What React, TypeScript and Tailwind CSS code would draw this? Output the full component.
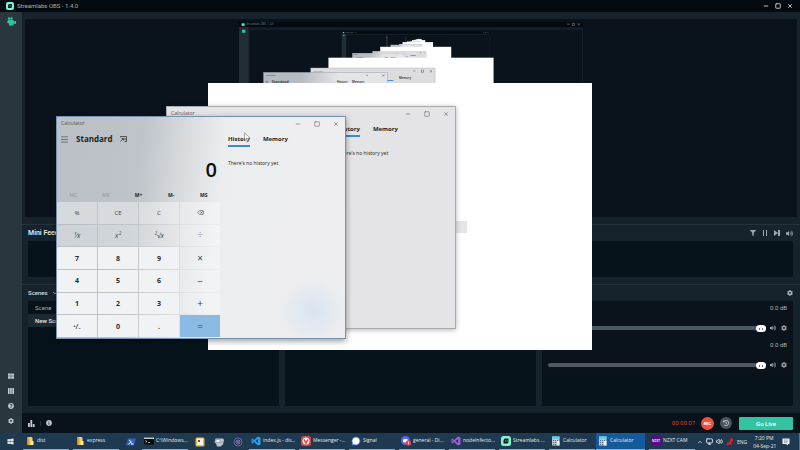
import React from "react";
import {
  FaCog,
  FaFilter,
  FaHistory,
  FaInfoCircle,
  FaQuestionCircle,
  FaThLarge,
  FaVolumeUp,
  FaWindows,
} from "react-icons/fa";
import { ChevronDown, ChevronUp, Delete, Menu, Minus, Monitor, Square, Volume2, X } from "lucide-react";

const ROBOTO = "font-['Roboto',sans-serif]";
const SEGOE = "font-['Open_Sans','Noto_Sans',sans-serif]";

/* ---------- Live preview: the captured screen contains itself ---------- */

const SCALE = 0.43;

function Capture({ ox, oy, s, depth }: { ox: number; oy: number; s: number; depth: number }) {
  const X = (v: number) => ox + v * s;
  const Y = (v: number) => oy + v * s;
  const rect = (x: number, y: number, w: number, h: number, fill: string, stroke?: string) => (
    <rect x={X(x)} y={Y(y)} width={w * s} height={h * s} fill={fill} stroke={stroke} strokeWidth={stroke ? s : 0} />
  );
  const label = (x: number, y: number, size: number, text: string, weight: number, fill: string) => (
    <text x={X(x)} y={Y(y)} fontSize={size * s} fontWeight={weight} fill={fill}>
      {text}
    </text>
  );
  const detailed = depth < 2;
  return (
    <g>
      {rect(0, 0, 800, 450, "#131f28")}
      {rect(0, 0, 800, 12, "#030a10")}
      {rect(0, 12, 22, 421, "#222e36")}
      {rect(25, 19, 772, 198, "#0a131c")}
      {rect(6, 3, 7, 6, "#5fe3c4")}
      {rect(7, 18, 8, 7, "#2fbfa0")}
      {detailed && label(17, 8, 6, "Streamlabs OBS - 1.4.0", 400, "#7b858b")}
      {detailed && (
        <path
          d={`M${X(763)} ${Y(5)}h${6 * s}M${X(775)} ${Y(3)}h${5 * s}v${5 * s}h${-5 * s}zM${X(788)} ${Y(3)}l${5 * s} ${5 * s}m0 ${-5 * s}l${-5 * s} ${5 * s}`}
          stroke="#a7b0b5"
          strokeWidth={s}
          fill="none"
        />
      )}
      {depth < 5 && <Capture ox={X(239)} oy={Y(22)} s={s * SCALE} depth={depth + 1} />}
      {rect(208, 83, 384, 267, "#ffffff")}
      {rect(167, 107, 289, 222, "#dddcde", "#a9abae")}
      {rect(57, 117, 289, 222, "url(#glass)", "#8b98a5")}
      {detailed && (
        <g>
          {label(172, 116, 5, "Calculator", 400, "#777777")}
          {label(372, 132, 7, "Memory", 600, "#222222")}
          {label(62, 126, 5, "Calculator", 400, "#333333")}
          {label(76, 142, 9, "Standard", 600, "#222222")}
          {label(228, 142, 7, "History", 600, "#222222")}
          {label(263, 142, 7, "Memory", 600, "#222222")}
          <path
            d={`M${X(405)} ${Y(114)}h${5 * s}M${X(424)} ${Y(112)}h${5 * s}v${5 * s}h${-5 * s}zM${X(444)} ${Y(112)}l${5 * s} ${5 * s}m0 ${-5 * s}l${-5 * s} ${5 * s}M${X(295)} ${Y(124)}h${5 * s}M${X(333)} ${Y(122)}l${5 * s} ${5 * s}m0 ${-5 * s}l${-5 * s} ${5 * s}M${X(62)} ${Y(138)}h${6 * s}m0 ${3 * s}h${-6 * s}`}
            stroke="#444444"
            strokeWidth={s}
            fill="none"
          />
          <path d={`M${X(346)} ${Y(136)}h${13 * s}`} stroke="#2f80cc" strokeWidth={2 * s} />
        </g>
      )}
    </g>
  );
}

function Preview() {
  return (
    <div className="mx-[3px] mt-[7px] flex min-h-0 flex-1 items-center justify-center overflow-hidden bg-[#0a131c]">
      <svg viewBox="0 0 344 193" className="h-[193px] w-[344px] font-['Open_Sans',sans-serif]" aria-label="Live preview">
        <defs>
          <linearGradient id="glass">
            <stop offset="0.3" stopColor="#b5bbc1" />
            <stop offset="0.6" stopColor="#e4e5e7" />
          </linearGradient>
        </defs>
        <Capture ox={0} oy={0} s={SCALE} depth={0} />
      </svg>
    </div>
  );
}

/* ---------- Streamlabs ---------- */

function StreamlabsLogo({ className }: { className: string }) {
  return (
    <svg viewBox="0 0 16 16" className={className}>
      <rect width="16" height="16" rx="4" fill="#80f5d2" />
      <path d="M4 12V7a3 3 0 0 1 3-3h5v5a3 3 0 0 1-3 3z" fill="#0a1a20" />
      <path d="M7.500 7v2M10 7v2" stroke="#80f5d2" strokeWidth="1.2" />
    </svg>
  );
}

function TitleBar() {
  return (
    <header className="flex h-3 shrink-0 items-center bg-[#030b10] pr-[7px] pl-[6px] text-[#a4adb2]">
      <StreamlabsLogo className="size-[8px]" />
      <h1 className="ml-[3px] flex-1 text-[6px] leading-[12px]">Streamlabs OBS - 1.4.0</h1>
      <div className="flex gap-[6px] text-[#b7bec2]">
        <button aria-label="Minimize"><Minus className="size-[6px]" strokeWidth={4} /></button>
        <button aria-label="Maximize"><Square className="size-[6px]" strokeWidth={4} /></button>
        <button aria-label="Close"><X className="size-[6px]" strokeWidth={4} /></button>
      </div>
    </header>
  );
}

function Sidebar() {
  return (
    <nav className="flex w-[22px] shrink-0 flex-col items-center bg-[#2a363e] pt-[5px] pb-[9px] text-[#c3cacd]">
      <button aria-label="Editor">
        <svg viewBox="0 0 18 18" className="size-[9px] fill-[#31c3a2]">
          <circle cx="4" cy="3" r="2.4" />
          <circle cx="9" cy="3" r="2.4" />
          <path d="M2 6h11v3l5-1v6l-5-1v4H4v-4L0 11z" />
        </svg>
      </button>
      <div className="mt-auto flex flex-col items-center gap-[9px]">
        <button aria-label="Dashboard"><FaThLarge className="size-[6px]" /></button>
        <button aria-label="Layout">
          <svg viewBox="0 0 6 6" className="size-[6px] fill-current"><path d="M0 0h1.6v6H0zM2.2 0h1.6v6H2.2zM4.4 0H6v6H4.4z" /></svg>
        </button>
        <button aria-label="Help"><FaQuestionCircle className="size-[6px]" /></button>
        <button aria-label="Settings"><FaCog className="size-[6px]" /></button>
      </div>
    </nav>
  );
}

function MixerRow({ name }: { name: string }) {
  return (
    <div className="h-[37px]">
      <div className="text-right text-[6px] leading-[8px] text-[#a9b2b7]">0.0 dB</div>
      <div className="mt-[12px] flex h-[8px] items-center gap-[4px] text-[#98a2a8]">
        <input
          type="range"
          aria-label={name}
          min={0}
          max={100}
          defaultValue={100}
          className="h-[4px] min-w-0 flex-1 appearance-none rounded-full bg-[#4d5962] [&::-webkit-slider-thumb]:h-[7px] [&::-webkit-slider-thumb]:w-[10px] [&::-webkit-slider-thumb]:appearance-none [&::-webkit-slider-thumb]:rounded-full [&::-webkit-slider-thumb]:bg-white [&::-webkit-slider-thumb]:bg-[linear-gradient(#6b7478,#6b7478),linear-gradient(#6b7478,#6b7478)] [&::-webkit-slider-thumb]:bg-[length:1px_2px] [&::-webkit-slider-thumb]:bg-[position:3px_3px,6px_3px] [&::-webkit-slider-thumb]:bg-no-repeat"
        />
        <button aria-label={"Mute " + name}><FaVolumeUp className="size-[6px]" /></button>
        <button aria-label={"Options for " + name} className="ml-[1px]"><FaCog className="size-[6px]" /></button>
      </div>
    </div>
  );
}

function Panels() {
  return (
    <div className="mt-[7px] border-t border-[#24313a] pr-[7px] pl-[6px]">
      <section>
        <div className="flex h-4 items-center text-[#9ea7ac]">
          <h2 className="flex-1 text-[7px] leading-[16px] font-semibold text-[#e4e8ea]">Mini Feed</h2>
          <div className="flex items-center gap-[6px]">
            <button aria-label="Filter"><FaFilter className="size-[6px]" /></button>
            <button aria-label="Pause">
              <svg viewBox="0 0 6 6" className="size-[6px] stroke-current"><path d="M1.500 0v6M4.500 0v6" /></svg>
            </button>
            <button aria-label="Skip">
              <svg viewBox="0 0 6 6" className="size-[6px] fill-current"><path d="M0 0l4 3-4 3zM4 0h2v6H4z" /></svg>
            </button>
            <button aria-label="Mute"><FaVolumeUp className="size-[7px]" /></button>
          </div>
        </div>
        <div className="h-9 rounded-[1px] bg-[#07131b]" />
      </section>
      <div className="-mr-[7px] -ml-[6px] mt-[7px] border-t border-[#24313a]" />
      <div className="grid grid-cols-3 gap-[6px]">
        <section>
          <div className="flex h-4 items-center gap-[4px] text-[#d9dee1]">
            <h2 className="text-[6px] leading-[16px] font-medium">Scenes</h2>
            <ChevronDown className="size-[6px]" strokeWidth={3} />
          </div>
          <ul className="h-[105px] bg-[#07131b] text-[6px] leading-[13px]">
            <li className="px-[7px] text-[#a4adb2]">Scene</li>
            <li className="bg-[#1c2930] px-[7px] font-medium text-[#e4e8ea]">New Scene</li>
          </ul>
        </section>
        <section>
          <div className="h-4" />
          <div className="h-[105px] bg-[#07131b]" />
        </section>
        <section>
          <div className="flex h-4 items-center justify-end text-[#aeb6ba]">
            <button aria-label="Mixer settings"><FaCog className="size-[6px]" /></button>
          </div>
          <div className="h-[105px] bg-linear-to-b from-[#0a121b] from-70% to-[#07131b] to-75% px-[6px] pt-[3px]">
            <MixerRow name="Desktop Audio" />
            <MixerRow name="Mic/Aux" />
          </div>
        </section>
      </div>
    </div>
  );
}

function Footer() {
  return (
    <footer className="mt-[7px] flex h-5 shrink-0 items-center bg-[#07121a] pr-[7px] pl-[6px] text-[#c3cacd]">
      <button aria-label="Performance">
        <svg viewBox="0 0 7 7" className="size-[7px] fill-current"><path d="M0 3h1.8v4H0zM2.400 0h1.8v7H2.4zM4.8 4h1.8v3H4.8z" /></svg>
      </button>
      <span className="mx-[5px] h-[5px] w-px bg-[#2a363e]" />
      <button aria-label="Information"><FaInfoCircle className="size-[6px]" /></button>
      <span className="ml-auto text-[6px] leading-[8px] text-[#d8402f]">00:00:07</span>
      <button className="ml-[6px] size-[13px] rounded-full bg-[#f1513b] text-center text-[4px] leading-[13px] font-bold text-white">REC</button>
      <button aria-label="Replay buffer" className="ml-[6px] flex size-[12px] items-center justify-center rounded-full bg-[#4a555d]">
        <FaHistory className="size-[6px]" />
      </button>
      <button className="ml-[7px] h-[13px] w-[54px] rounded-[1px] bg-[#31c3a2] text-[6px] leading-[13px] font-medium text-white">Go Live</button>
    </footer>
  );
}

/* ---------- Calculator ---------- */

const KEYS = ["%", "CE", "C", "⌫", "¹⁄x", "x²", "²√x", "÷", "7", "8", "9", "×", "4", "5", "6", "−", "1", "2", "3", "+", "⁺∕₋", "0", ".", "="];

function keyStyle(i: number) {
  if (i === 23) return "bg-[#8bbbe2] text-[10px] text-[#244a68]";
  if (i === 7) return "bg-white/35 text-[10px] text-[#999999]";
  if (i % 4 === 3) return "bg-white/35 text-[10px] text-[#444444]";
  if (i < 4) return "bg-white/40 text-[6px] text-[#444444]";
  if (i < 8) return "bg-white/30 text-[7px] italic text-[#444444]";
  if (i === 20) return "bg-[#f1f2f4] text-[7px] font-semibold text-[#333333]";
  return "bg-[#f1f2f4] text-[7px] font-bold text-[#2c2c2c]";
}

function Keypad() {
  return (
    <div className="flex w-[163px] shrink-0 flex-col">
      <div className="flex h-[18px] items-center px-[3px]">
        <button aria-label="Navigation" className="mr-[7px]"><Menu className="size-[9px] text-[#555555]" strokeWidth={2} /></button>
        <h2 className="text-[8px] leading-[18px] font-bold text-[#222222]">Standard</h2>
        <button aria-label="Keep on top" className="ml-[7px]">
          <svg viewBox="0 0 14 12" className="h-[6px] w-[7px] fill-none stroke-[#333333]" strokeWidth="1.6">
            <path d="M1 1h12v10H9M1 1v2M1 11l6-6M3 5h4v4M10 4v4" />
          </svg>
        </button>
      </div>
      <output className="h-[42px] pr-[3px] text-right text-[20px] leading-[44px] font-semibold text-[#0d0d0d]">0</output>
      <div className="grid h-[12px] grid-cols-5 items-start text-[5px] leading-[10px] font-bold text-[#222222]">
        <button disabled className="font-normal text-[#8f969c]">MC</button>
        <button disabled className="font-normal text-[#8f969c]">MR</button>
        <button>M+</button>
        <button>M-</button>
        <button>MS</button>
      </div>
      <div className="grid min-h-0 flex-1 grid-cols-4 grid-rows-6 gap-px pb-px">
        {KEYS.map((k, i) => (
          <button key={i} aria-label={i === 3 ? "Backspace" : undefined} className={"flex min-h-0 items-center justify-center leading-none " + keyStyle(i)}>
            {i === 3 ? <Delete className="size-[7px]" /> : k}
          </button>
        ))}
      </div>
    </div>
  );
}

function Calculator({ place, frame, history, children }: { place: string; frame: string; history: string; children?: React.ReactNode }) {
  return (
    <div className={"absolute flex h-[223px] w-[290px] flex-col border " + SEGOE + " " + place + " " + frame}>
      <div className="flex h-[13px] shrink-0 items-center pr-[6px] pl-[4px] text-[#555555]">
        <span className="flex-1 text-[5px] leading-[13px]">Calculator</span>
        <div className="flex gap-[13px]">
          <button aria-label="Minimize"><Minus className="size-[6px]" /></button>
          <button aria-label="Maximize"><Square className="size-[6px]" /></button>
          <button aria-label="Close"><X className="size-[6px]" /></button>
        </div>
      </div>
      <div className="flex min-h-0 flex-1">
        {children}
        <div className={"flex-1 pt-[5px] text-[#1f1f1f] " + history}>
          <div className="flex gap-[13px] text-[6px] leading-[9px] font-bold">
            <button className="flex flex-col">
              History
              <span className="mt-[1px] h-[2px] w-full bg-[#3b8ad0]" />
            </button>
            <button className="self-start">Memory</button>
          </div>
          <p className="mt-[12px] font-['Noto_Sans','Open_Sans',sans-serif] text-[5px] leading-[9px] text-[#333333]">There's no history yet</p>
        </div>
      </div>
    </div>
  );
}

function Desktop() {
  return (
    <>
      <div className="absolute top-[83px] left-[208px] h-[267px] w-[384px] bg-white" />
      <div className="absolute top-[221px] left-[456px] h-[12px] w-[11px] bg-[#e4e5e8]" />
      <Calculator
        place="top-[106px] left-[166px]"
        frame="border-[#aaabad] bg-[#e4e3e5] shadow-[0_1px_5px_rgba(0,0,0,0.3)]"
        history="pl-[171px]"
      />
      <Calculator
        place="top-[116px] left-[56px]"
        frame="border-[#7592b4] bg-[radial-gradient(circle_at_256px_194px,rgba(212,227,241,0.8),transparent_34px),linear-gradient(96deg,#b9c0c6_0%,#bec4c9_28%,#d8dbde_42%,#ecedef_55%,#eeeef0_100%)] shadow-[0_2px_6px_rgba(0,0,0,0.4)]"
        history="pl-[8px]"
      >
        <Keypad />
      </Calculator>
      <svg viewBox="0 0 10 16" className="absolute top-[132px] left-[244px] h-[10px] w-[6px]">
        <path d="M1 1v12l3-3 2 5 2-1-2-4h4z" fill="white" stroke="#666666" />
      </svg>
    </>
  );
}

/* ---------- Taskbar ---------- */

function TaskButton({ text, icon, active }: { text: string; icon: React.ReactNode; active?: boolean }) {
  return (
    <button
      className={
        "mx-[2px] flex h-full w-[46px] shrink-0 items-center gap-[2px] overflow-hidden border-b pl-[2px] text-[5px] whitespace-nowrap " +
        (active ? "-ml-px w-[49px] border-[#79b7ea] bg-[#155a9c]" : "border-[#86a9c5]")
      }
    >
      {icon}
      {text}
    </button>
  );
}

function PinButton({ name, children }: { name: string; children: React.ReactNode }) {
  return (
    <button aria-label={name} className="flex h-full w-[19px] shrink-0 items-center justify-center">
      {children}
    </button>
  );
}

const ICON = "size-[10px] shrink-0";

const folder = (
  <svg viewBox="0 0 20 20" className={ICON}>
    <path d="M5 2h8l2 2v14H5z" fill="#f5cf6b" />
    <path d="M5 2l4 3v14l-4-2z" fill="#d9a33a" />
    <path d="M12 10h5v8h-5z" fill="#ffe9a8" />
  </svg>
);
const terminal = (
  <svg viewBox="0 0 20 20" className={ICON}>
    <path d="M0 3h20v14H0z" fill="#0a0a0a" />
    <path d="M0 3h20v3H0z" fill="#c9cdd0" />
    <path d="M3 9l3 2-3 2M8 13h4" stroke="#dddddd" fill="none" strokeWidth="1.4" />
  </svg>
);
const ribbon = (fill: string) => (
  <svg viewBox="0 0 20 20" className={ICON}>
    <path d="M14 1l5 2v14l-5 2-8-7-3 3-2-1V6l2-1 3 3zM14 6l-5 4 5 4zM3 8v4l2-2z" fill={fill} fillRule="evenodd" />
  </svg>
);
const calc = (
  <svg viewBox="0 0 20 20" className={ICON}>
    <path d="M2 1h15v18H2z" fill="#bcc6ce" />
    <path d="M2 1h15v5H2z" fill="#5fd0e8" />
    <path d="M5 8v10M9 8v10M13 8v10" stroke="#5c6a75" strokeWidth="2" strokeDasharray="2 2" />
    <path d="M12 10h5v9h-5z" fill="#e9eef2" />
  </svg>
);

function Taskbar() {
  return (
    <div className={"flex h-[17px] shrink-0 items-center overflow-hidden bg-[#1f3a50] text-[#e3e9ed] " + SEGOE}>
      <button aria-label="Start" className="flex w-[21px] shrink-0 justify-center"><FaWindows className="size-[7px]" /></button>
      <TaskButton text="dist" icon={folder} />
      <TaskButton text="express" icon={folder} />
      <PinButton name="PowerShell">
        <svg viewBox="0 0 20 20" className={ICON}>
          <path d="M4 3h16l-4 14H0z" fill="#2f63c4" />
          <path d="M6 6l5 4-6 4M10 14h5" stroke="white" strokeWidth="2" fill="none" />
        </svg>
      </PinButton>
      <TaskButton text="C:\Windows..." icon={terminal} />
      <PinButton name="Notes">
        <svg viewBox="0 0 20 20" className={ICON}>
          <rect x="1" y="1" width="18" height="18" rx="3" fill="#eeb73c" />
          <path d="M4 3h12v13H4z" fill="#f7f4ea" />
          <path d="M6 6h4v4H6z" fill="#4b5963" />
        </svg>
      </PinButton>
      <PinButton name="Photos">
        <svg viewBox="0 0 20 20" className={ICON}>
          <path d="M3 3h15l2 3-2 9-5 4H6l-2-6-3-2z" fill="#b9c5cd" />
          <path d="M4 5h8v6H4zM12 12l5-3" fill="#eef3f6" stroke="#71808c" />
        </svg>
      </PinButton>
      <PinButton name="Eclipse">
        <svg viewBox="0 0 20 20" className={ICON}>
          <circle cx="10" cy="10" r="8" fill="#182550" stroke="#8484b8" strokeWidth="1.5" />
          <circle cx="10" cy="10" r="4" fill="none" stroke="#a9a7d8" strokeWidth="1.5" />
          <circle cx="10" cy="10" r="1.5" fill="#c9c8ee" />
        </svg>
      </PinButton>
      <TaskButton text="index.js - dis..." icon={ribbon("#2c9de8")} />
      <TaskButton
        text="Messenger -..."
        icon={
          <svg viewBox="0 0 20 20" className={ICON}>
            <rect width="20" height="20" rx="5" fill="#e2403d" />
            <circle cx="10" cy="10" r="7" fill="white" />
            <path d="M6 7l4 7 4-7" stroke="#d93a38" strokeWidth="3" fill="none" />
          </svg>
        }
      />
      <TaskButton
        text="Signal"
        icon={
          <svg viewBox="0 0 20 20" className={ICON}>
            <path d="M10 2a8 8 0 1 1-4 15l-4 1 1-4A8 8 0 0 1 10 2z" fill="white" stroke="#3a76f0" strokeWidth="1.5" />
          </svg>
        }
      />
      <TaskButton
        text="general - Di..."
        icon={
          <svg viewBox="0 0 20 20" className={ICON}>
            <circle cx="9" cy="9" r="9" fill="#5865f2" />
            <path d="M4 12c0-4 1-6 2-6h6c1 0 2 2 2 6l-3 1H7z" fill="white" />
            <circle cx="15" cy="14" r="5.5" fill="#e5413f" />
            <path d="M15 11v6" stroke="white" strokeWidth="1.5" />
          </svg>
        }
      />
      <TaskButton text="nodeInfecto..." icon={ribbon("#9a5fd0")} />
      <TaskButton text="Streamlabs ..." icon={<StreamlabsLogo className={ICON} />} />
      <TaskButton text="Calculator" icon={calc} />
      <TaskButton text="Calculator" icon={calc} active />
      <TaskButton
        text="NZXT CAM"
        icon={<span className="flex size-[10px] shrink-0 items-center justify-center bg-[#5b0a86] text-[3px] font-bold">NZXT</span>}
      />
      <div className="ml-auto flex h-full shrink-0 items-center gap-[3px]">
        <ChevronUp className="size-[6px]" strokeWidth={3} />
        <Monitor className="size-[7px]" strokeWidth={3} />
        <Volume2 className="size-[7px]" strokeWidth={3} />
        <svg viewBox="0 0 16 16" className="size-[8px]"><path d="M9 1h5v5l-4 3 2 5-6-1-5 2 2-7 4 1z" fill="#d3262c" /></svg>
        <span className="text-[5px] leading-[8px]">ENG</span>
        <div className="ml-[3px] w-[22px] text-center text-[5px] leading-[8px] whitespace-nowrap">
          <div>7:20 PM</div>
          <div>04-Sep-21</div>
        </div>
        <button aria-label="Notifications" className="mr-[6px] ml-[4px]">
          <svg viewBox="0 0 16 16" className="size-[8px]">
            <path d="M1 1h14v11h-3v3l-4-3H1z" fill="#eef2f4" />
            <path d="M4 4h8M4 6.500h8M4 9h6" stroke="#5c6f7d" />
          </svg>
        </button>
        <span className="h-full w-[2px] border-l border-[#5a7184]" />
      </div>
    </div>
  );
}

export default function App() {
  return (
    <div className={"relative flex h-screen w-full flex-col overflow-hidden bg-[#17232c] " + ROBOTO}>
      <TitleBar />
      <div className="flex min-h-0 flex-1">
        <Sidebar />
        <main className="flex min-w-0 flex-1 flex-col">
          <Preview />
          <Panels />
          <Footer />
        </main>
      </div>
      <Taskbar />
      <Desktop />
    </div>
  );
}
